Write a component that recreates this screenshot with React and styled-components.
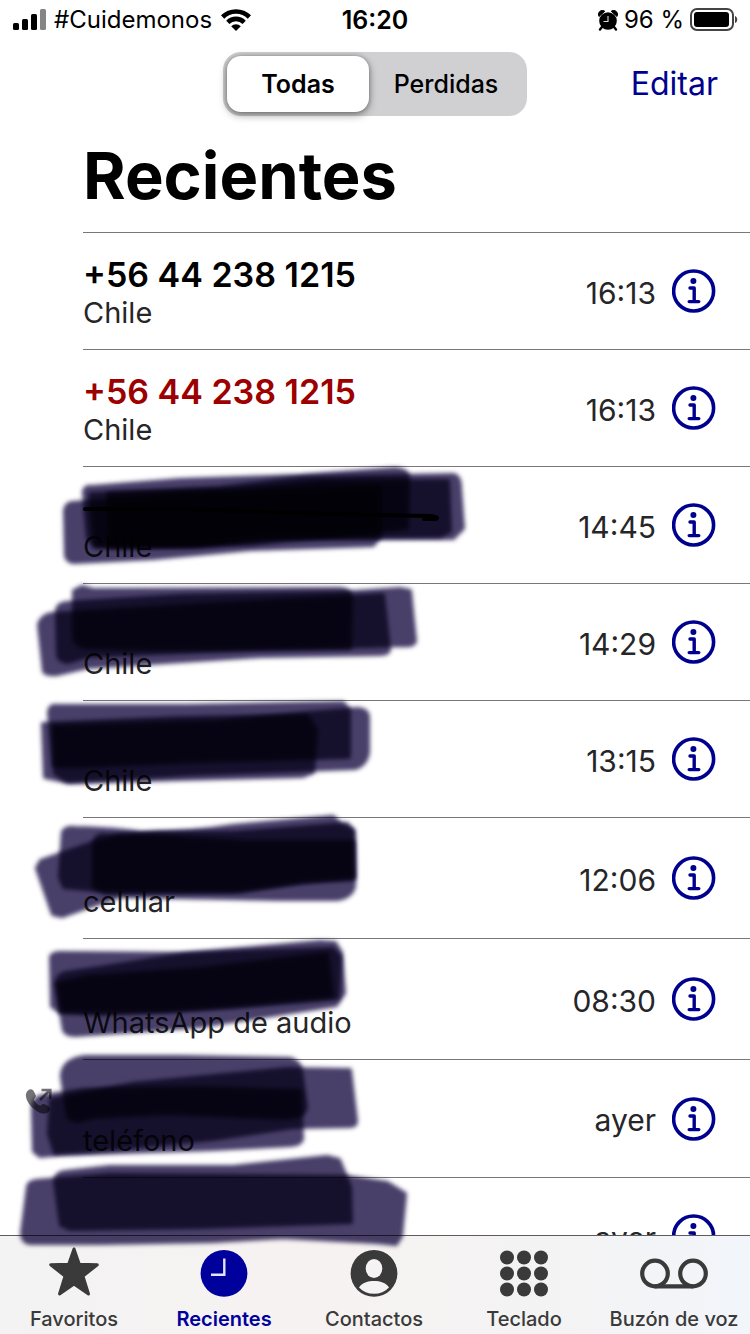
import React, { useState } from "react";
import styled, { createGlobalStyle } from "styled-components";

const GlobalStyle = createGlobalStyle`
  * { box-sizing: border-box; }
  body {
    margin: 0;
    background: #fff;
    color: #000;
    font-family: Inter, "Liberation Sans", sans-serif;
  }
  button { font: inherit; color: inherit; border: 0; background: none; padding: 0; cursor: pointer; }
  svg { display: block; }
`;

const Page = styled.div`
  min-height: 100vh;
  overflow-x: hidden;
`;

const StatusBar = styled.div`
  display: grid;
  grid-template-columns: 1fr auto 1fr;
  align-items: center;
  height: 40px;
  padding: 0 12px;
  font-size: 24px;
  line-height: 32px;
`;

const StatusGroup = styled.div`
  display: flex;
  align-items: center;
  gap: ${(p) => p.$gap}px;
  justify-content: ${(p) => (p.$end ? "flex-end" : "flex-start")};
  white-space: nowrap;
`;

const Clock = styled.time`
  font-size: 25px;
  font-weight: 600;
`;

const NavBar = styled.header`
  display: grid;
  grid-template-columns: 1fr 304px 1fr;
  align-items: center;
  height: 64px;
  margin-top: 12px;
  padding: 0 32px;
`;

const Segmented = styled.div`
  grid-column: 2;
  display: grid;
  grid-template-columns: 142px 1fr;
  height: 64px;
  padding: 4px;
  border-radius: 18px;
  background: #d0d0d3;
`;

const Segment = styled.button`
  border-radius: 14px;
  && { font-size: 25px; }
  && { font-weight: ${(p) => (p.$active ? 600 : 500)}; }
  ${(p) => p.$active && "background: #fff; box-shadow: 0 3px 8px rgba(0, 0, 0, 0.4), 0 0 4px rgba(0, 0, 0, 0.25);"}
`;

const EditButton = styled.button`
  justify-self: end;
  && {
    color: #00008f;
    font-size: 32px;
    line-height: 40px;
  }
`;

const Title = styled.h1`
  margin: 0;
  padding: 20px 0 16px 83px;
  font-size: 65px;
  line-height: 80px;
  font-weight: 700;
`;

const CallList = styled.ul`
  list-style: none;
  margin: 0;
  padding: 0;
`;

const Row = styled.li`
  position: relative;
  padding-left: 83px;
`;

const RowBody = styled.div`
  display: flex;
  align-items: center;
  min-height: ${(p) => p.$height}px;
  padding-right: 34px;
  border-top: 1px solid #777779;
`;

const Caller = styled.div`
  flex: 1;
  min-width: 0;
  padding-top: ${(p) => (p.$tall ? 8 : 4)}px;
`;

const Name = styled.div`
  height: 40px;
  font-size: 34px;
  line-height: 40px;
  font-weight: 600;
  color: ${(p) => (p.$missed ? "#9c0000" : "#000")};
`;

const Detail = styled.div`
  font-size: 29px;
  line-height: 36px;
  color: #262628;
`;

const When = styled.span`
  margin-right: 16px;
  padding-top: 3px;
  font-size: 30px;
  line-height: 36px;
  color: #262628;
`;

const InfoButton = styled.button`
  width: 44px;
  height: 44px;
`;

const Outgoing = styled.span`
  position: absolute;
  left: 25px;
  top: 29px;
`;

const Marker = styled.svg`
  position: absolute;
  left: 0;
  top: 0;
  z-index: 2;
  width: 480px;
  height: 117px;
  overflow: visible;
  pointer-events: none;
  mix-blend-mode: multiply;
`;

const Stroke = styled.path`
  fill: #483f6a;
  stroke: #483f6a;
  stroke-width: 4;
  stroke-linejoin: round;
  mix-blend-mode: multiply;
`;

const TabBar = styled.nav`
  position: fixed;
  left: 0;
  right: 0;
  bottom: 0;
  z-index: 1;
  display: grid;
  grid-template-columns: repeat(5, 1fr);
  height: 99px;
  border-top: 1px solid #5c5c5f;
  background: linear-gradient(90deg, #f3f3f3, #f7f2f2 40%, #f4f3f3 70%, #f2f5fa);
`;

const Tab = styled.a`
  display: flex;
  flex-direction: column;
  align-items: center;
  gap: 8px;
  padding: 9px 2px 0 0;
  font-size: 20px;
  line-height: 28px;
  font-weight: ${(p) => (p.$active ? 600 : 500)};
  color: ${(p) => (p.$active ? "#00009c" : "#3a3a3a")};
  text-decoration: none;
  white-space: nowrap;
`;

const SignalIcon = () => (
  <svg width="34" height="22" viewBox="0 0 34 22" aria-hidden="true">
    <rect x="1" y="14" width="6" height="7" rx="1.5" />
    <rect x="10" y="10" width="6" height="11" rx="1.5" />
    <rect x="19" y="5" width="6" height="16" rx="1.5" />
    <rect x="28" y="0" width="6" height="21" rx="1.5" fill="#858585" />
  </svg>
);

const WifiIcon = () => (
  <svg width="32" height="24" viewBox="0 0 32 24" aria-hidden="true">
    <g fill="none" stroke="#000" strokeWidth="4.6">
      <path d="M2.600 9A19 19 0 0 1 29.400 9" />
      <path d="M7.800 14.300a11.600 11.600 0 0 1 16.400 0" />
    </g>
    <path d="M11.200 18.200a6.800 6.800 0 0 1 9.600 0L16 23z" />
  </svg>
);

const AlarmIcon = () => (
  <svg width="20" height="21" viewBox="0 0 20 21" aria-hidden="true">
    <circle cx="10" cy="11" r="8.8" />
    <path d="M1 6.5A4 4 0 0 1 6.8 1.2zM19 6.5a4 4 0 0 0-5.8-5.3z" stroke="#000" />
    <path d="M4 17l-2 2.500M16 17l2 2.500" stroke="#000" strokeWidth="2.4" strokeLinecap="round" />
    <path d="M10 6v5.5H5.5" fill="none" stroke="#ddd" strokeWidth="1.1" />
  </svg>
);

const BatteryIcon = () => (
  <svg width="48" height="24" viewBox="0 0 48 24" aria-hidden="true">
    <rect x="1" y="1" width="42" height="21" rx="6" fill="none" stroke="#444" strokeWidth="2" />
    <rect x="4" y="4" width="35" height="15" rx="3" />
    <path d="M45 8c3 1 3 6 0 7z" fill="#444" />
  </svg>
);

const InfoIcon = () => (
  <svg width="44" height="44" viewBox="0 0 44 44" aria-hidden="true">
    <circle cx="21.600" cy="22" r="20" fill="none" stroke="#00008f" strokeWidth="3.6" />
    <circle cx="21.400" cy="12" r="3" fill="#00008f" />
    <path d="M18 19h4.200v13M17.200 32.600h9.600" fill="none" stroke="#00008f" strokeWidth="3.4" strokeLinecap="round" strokeLinejoin="round" />
  </svg>
);

const OutgoingIcon = () => (
  <svg width="28" height="28" viewBox="0 0 28 28" role="img" aria-label="Llamada saliente">
    <path
      d="M4.500 1.600C6.400 .6 8 1.500 9.200 4l1.300 2.800c.7 1.600 0 2.700-1 3.600-.8.700-.5 1.500 0 2.400 1 1.800 2.300 3.100 4.200 4.300.9.500 1.700.8 2.500 0 1-1 2.100-1.600 3.600-.8l3.500 1.900c2.300 1.300 2.500 3 1 4.900-2.800 3.500-7.300 3.300-12 .4C6.800 20.100 2.500 15 1.200 9.800.4 6.200 1.200 3.300 4.500 1.600z"
      fill="#737375"
    />
    <path d="M15 12L25 2M16.500 2H25.300v9" fill="none" stroke="#737375" strokeWidth="2.600" />
  </svg>
);

const StarIcon = () => (
  <svg width="52" height="52" viewBox="0 0 52 52" aria-hidden="true">
    <path
      d="M26 4l5.300 15.300 18 .5-14.300 11.400L40.500 49 26 39 11.500 49 17 31.200 2.700 19.800l18-.5z"
      fill="currentColor" stroke="currentColor" strokeWidth="3" strokeLinejoin="round"
    />
  </svg>
);

const ClockIcon = () => (
  <svg width="52" height="52" viewBox="0 0 52 52" aria-hidden="true">
    <circle cx="26" cy="28.400" r="23.400" fill="currentColor" />
    <path d="M26.300 13.500v16.300H13" fill="none" stroke="#e4e4ff" strokeWidth="2.400" />
  </svg>
);

const PersonIcon = () => (
  <svg width="52" height="52" viewBox="0 0 52 52" aria-hidden="true">
    <circle cx="26" cy="28.400" r="23.400" fill="currentColor" />
    <ellipse cx="26" cy="23.500" rx="8.300" ry="9.500" fill="#f5f3f3" />
    <path d="M11 42.500c3-5 9-6.500 15-6.500s12 1.500 15 6.500c-4 4-9 6.300-15 6.300S15 46.500 11 42.500z" fill="#f5f3f3" />
  </svg>
);

const KeypadIcon = () => (
  <svg width="52" height="52" viewBox="0 0 52 52" aria-hidden="true" fill="currentColor">
    {[12.5, 28.5, 44.5].map((y) => [9, 26, 43].map((x) => <circle key={`${x}-${y}`} cx={x} cy={y} r="7" />))}
  </svg>
);

const VoicemailIcon = () => (
  <svg width="72" height="52" viewBox="0 0 72 52" aria-hidden="true" fill="none" stroke="currentColor" strokeWidth="4.200">
    <circle cx="17" cy="28.500" r="12.800" />
    <circle cx="55" cy="28.500" r="12.800" />
    <path d="M17 41.300h38" />
  </svg>
);

const calls = [
  { name: "+56 44 238 1215", detail: "Chile", when: "16:13", height: 117 },
  { name: "+56 44 238 1215", detail: "Chile", when: "16:13", height: 117, missed: true },
  {
    detail: "Chile", when: "14:45", height: 117, line: true,
    marks: [
      "M65 44Q67 37 73 37L180 29 380 21 380 70 373 79 250 83 153 92 75 96Q68 96 66 90Z",
      "M84 26Q85 20 92 21L180 14 300 10 395 3Q408 4 408 12L407 62 250 78 95 80 88 72Z",
      "M90 28L220 22 300 12 453 9Q460 10 460 22L463 62 453 72 280 72 200 80 95 80Z",
      "M108 28L240 24 320 16 448 15 450 65 440 70 260 71 190 80 110 81Z",
    ],
  },
  {
    detail: "Chile", when: "14:29", height: 117,
    marks: [
      "M39 42Q41 33 52 31L200 22 383 12 389 66Q389 71 380 71L260 73 87 84 57 91Q46 92 44 88Z",
      "M57 29Q57 21 67 20L180 13 340 10 400 6 410 8 415 58Q414 63 403 62L253 66 87 73 68 79Q58 78 58 71Z",
      "M74 8L82 4 93 7 340 6Q351 7 351 16L350 65 153 66 85 64Q74 62 74 52Z",
    ],
  },
  {
    detail: "Chile", when: "13:15", height: 117,
    marks: [
      "M49 12Q50 5 57 6L187 6 343 3 349 10 349 57 200 61 80 66 54 66Z",
      "M43 24L180 18 307 16 316 30 313 72 303 76 180 79 70 82 45 77Z",
      "M54 27L220 22 310 13 358 9Q368 10 368 18L368 53Q366 65 355 68L187 74 67 81 55 73Z",
    ],
  },
  {
    detail: "celular", when: "12:06", height: 121,
    marks: [
      "M63 15Q66 10 75 11Q120 12 140 16Q190 16 233 9L333 0 341 8 353 13 354 60 313 64 233 74 97 73 64 70 60 60Z",
      "M37 51L41 44 93 26 120 19 160 16 233 16 347 7 353 15 354 69Q352 80 337 82L280 82 173 80 120 79 87 90 62 99 53 97Z",
      "M94 26Q96 17 105 18L153 19 247 25 353 25 353 62 303 64 240 74 105 76 94 70Z",
    ],
  },
  {
    detail: "WhatsApp de audio", when: "08:30", height: 121,
    marks: [
      "M51 19Q53 15 60 15L187 16 333 11 340 19 338 60 233 69 100 76 60 74 52 68Z",
      "M56 45Q58 37 66 35L100 30 187 16 320 4 335 5 341 15 344 55 336 67 200 88 133 93 75 97Q66 97 64 92Z",
      "M58 46L87 39 200 31 327 16 332 58 290 62 167 73 62 73Z",
    ],
  },
  {
    detail: "teléfono", when: "ayer", height: 118, outgoing: true,
    marks: [
      "M62 18Q62 1 85 -2L180 -2 290 0Q300 3 301 12L306 48Q305 58 285 59L167 54 93 58 78 62Q69 60 68 57Z",
      "M33 50Q33 38 45 37L83 31 200 29 300 32 302 80Q301 85 290 86L213 90 60 95 40 97 34 92Z",
      "M51 41L133 25 287 10 350 11 356 62Q356 67 350 67L293 68 213 80 87 92 55 94 49 75Z",
    ],
  },
  {
    when: "ayer", height: 117,
    marks: [
      "M22 56L28 10Q29 5 36 4L110 -2 347 0 387 6 405 17 401 59 396 67 377 65 283 60 213 64 100 66 30 66Q22 65 22 56Z",
      "M55 4Q56 -4 65 -5L110 -10 233 -10 327 -20 339 -17 350 10 351 45 200 50 70 52 61 48Z",
    ],
  },
];

const tabs = [
  ["Favoritos", StarIcon],
  ["Recientes", ClockIcon],
  ["Contactos", PersonIcon],
  ["Teclado", KeypadIcon],
  ["Buzón de voz", VoicemailIcon],
];

function CallRow({ call }) {
  return (
    <Row>
      <RowBody $height={call.height}>
        <Caller $tall={call.height > 120}>
          <Name $missed={call.missed}>{call.name}</Name>
          <Detail>{call.detail || "\u00a0"}</Detail>
        </Caller>
        <When>{call.when}</When>
        <InfoButton aria-label="Información"><InfoIcon /></InfoButton>
      </RowBody>
      {call.outgoing && <Outgoing><OutgoingIcon /></Outgoing>}
      {call.marks && (
        <Marker viewBox="0 0 480 117" aria-hidden="true">
          {call.marks.map((d) => <Stroke key={d} d={d} filter="url(#marker-edge)" />)}
          {call.line && (
            <path d="M85 43Q160 42 240 45T430 50Q440 51 436 53L424 53" fill="none" stroke="#000" strokeWidth="4" strokeLinecap="round" />
          )}
        </Marker>
      )}
    </Row>
  );
}

export default function App() {
  const [filter, setFilter] = useState("Todas");
  return (
    <Page>
      <GlobalStyle />
      <StatusBar>
        <StatusGroup $gap={8}>
          <SignalIcon />
          <span>#Cuidemonos</span>
          <WifiIcon />
        </StatusGroup>
        <Clock>16:20</Clock>
        <StatusGroup $gap={6} $end>
          <AlarmIcon />
          <span>96 %</span>
          <BatteryIcon />
        </StatusGroup>
      </StatusBar>
      <NavBar>
        <Segmented>
          {["Todas", "Perdidas"].map((label) => (
            <Segment key={label} $active={filter === label} aria-pressed={filter === label} onClick={() => setFilter(label)}>
              {label}
            </Segment>
          ))}
        </Segmented>
        <EditButton>Editar</EditButton>
      </NavBar>
      <main>
        <Title>Recientes</Title>
        <CallList>
          {calls.map((call, i) => <CallRow key={i} call={call} />)}
        </CallList>
      </main>
      <TabBar>
        {tabs.map(([label, Icon]) => (
          <Tab key={label} href="#" $active={label === "Recientes"} aria-current={label === "Recientes" ? "page" : undefined}>
            <Icon />
            {label}
          </Tab>
        ))}
      </TabBar>
      <svg width="0" height="0" aria-hidden="true">
        <filter id="marker-edge" x="-5%" y="-10%" width="110%" height="120%">
          <feGaussianBlur stdDeviation="2" />
        </filter>
      </svg>
    </Page>
  );
}
